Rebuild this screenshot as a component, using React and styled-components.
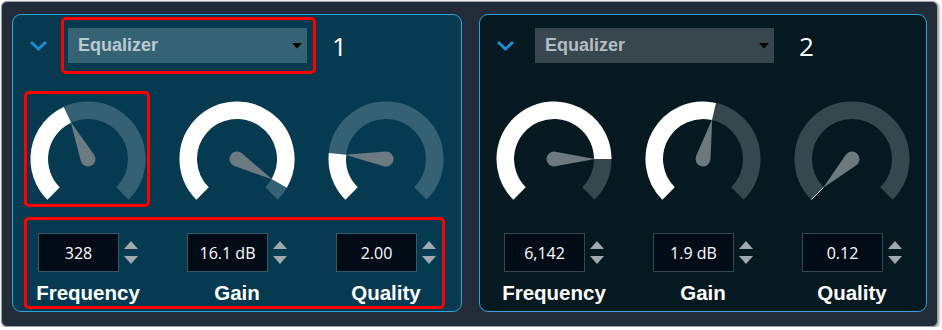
import React from 'react';
import styled, { createGlobalStyle, css } from 'styled-components';

const Global = createGlobalStyle`
  html, body { margin: 0; padding: 0; background: #ffffff; }
  body { font-family: "Liberation Sans", Arial, sans-serif; }
`;

const themes = {
  light: {
    bg: '#053a51',
    track: '#346274',
    select: '#366373',
    selectText: '#b9cad2',
    needle: '#6c7b81',
    inputBorder: '#3c5868',
  },
  dark: {
    bg: '#061820',
    track: '#37474e',
    select: '#38474e',
    selectText: '#b3bdc2',
    needle: '#6c7a80',
    inputBorder: '#2e4858',
  },
};

const Frame = styled.div`
  box-sizing: border-box;
  width: 937px;
  height: 326px;
  margin: 1px 0 0 1px;
  border: 1px solid #9ba1a6;
  border-radius: 6px;
  background: #222c38;
  box-shadow: 1px 1px 3px rgba(0, 0, 0, 0.45);
  padding: 12px 10px;
  display: flex;
  gap: 17px;
`;

const Panel = styled.section`
  box-sizing: border-box;
  width: ${(p) => p.$width}px;
  height: 298px;
  border: 1px solid #2aa3df;
  border-radius: 9px;
  background: ${(p) => p.$theme.bg};
  display: flex;
  flex-direction: column;
  padding-top: 13px;
`;

const Header = styled.div`
  display: flex;
  align-items: center;
  height: 35px;
  padding-left: 16px;
  gap: 20px;
`;

const Chevron = styled.svg`
  width: 19px;
  height: 11px;
  flex: none;
`;

/* Red annotation frame drawn over a region */
const Marked = styled.div`
  position: relative;
  margin-top: ${(p) => p.$mt || 0}px;
  ${(p) =>
    p.$on &&
    css`
      &::after {
        content: '';
        position: absolute;
        top: ${p.$t}px;
        right: ${p.$r}px;
        bottom: ${p.$b}px;
        left: ${p.$l}px;
        border: 3px solid #ff0000;
        border-radius: 5px;
        pointer-events: none;
      }
    `}
`;

const Select = styled.div`
  box-sizing: border-box;
  width: 239px;
  height: 35px;
  background: ${(p) => p.$theme.select};
  color: ${(p) => p.$theme.selectText};
  display: flex;
  align-items: center;
  justify-content: space-between;
  padding: 0 5px 0 10px;
  font: bold 18px "Liberation Sans", Arial, sans-serif;
`;

const Caret = styled.svg`
  width: 10px;
  height: 6px;
`;

const Index = styled.span`
  margin-left: 5px;
  color: #ffffff;
  font: 26px/1 "Open Sans", "Liberation Sans", sans-serif;
`;

const Row = styled.div`
  display: grid;
  grid-template-columns: repeat(3, 149px);
  justify-content: center;
`;

const GaugeRow = styled(Row)`
  margin-top: 36px;
`;

const Cell = styled.div`
  display: flex;
  flex-direction: column;
  align-items: center;
`;

const GaugeSvg = styled.svg`
  width: 120px;
  height: 112px;
  display: block;
`;

const InputGroup = styled.div`
  display: flex;
  align-items: center;
  gap: 5px;
  height: 39px;
`;

const ValueBox = styled.div`
  box-sizing: border-box;
  width: 81px;
  height: 39px;
  border: 1px solid ${(p) => p.$theme.inputBorder};
  background: #020c17;
  color: #ffffff;
  display: flex;
  align-items: center;
  justify-content: center;
  font: 16px "Open Sans", "Liberation Sans", sans-serif;
`;

const Spinner = styled.svg`
  width: 14px;
  height: 24px;
`;

const Label = styled.div`
  margin-top: 9px;
  color: #ffffff;
  font: bold 20.5px/24px "Liberation Sans", Arial, sans-serif;
`;

const CX = 60;
const CY = 60;
const R = 48.75;
const SW = 17.5;

function pt(a, r) {
  const rad = (a * Math.PI) / 180;
  return [CX + r * Math.sin(rad), CY - r * Math.cos(rad)];
}

function arc(a1, a2) {
  const [x1, y1] = pt(a1, R);
  const [x2, y2] = pt(a2, R);
  const large = a2 - a1 > 180 ? 1 : 0;
  return `M${x1} ${y1} A${R} ${R} 0 ${large} 1 ${x2} ${y2}`;
}

function Gauge({ angle, theme }) {
  const atMin = angle <= -135;
  const [lx1, ly1] = pt(-135, R - SW / 2);
  const [lx2, ly2] = pt(-135, R + SW / 2);
  return (
    <GaugeSvg viewBox="0 0 120 112">
      <path d={arc(-135, 135)} fill="none" stroke={theme.track} strokeWidth={SW} />
      {!atMin && <path d={arc(-135, angle)} fill="none" stroke="#ffffff" strokeWidth={SW} />}
      {atMin && (
        <line x1={lx1} y1={ly1} x2={lx2} y2={ly2} stroke="rgba(255,255,255,0.85)" strokeWidth="1" />
      )}
      <path
        d="M0 -41 L7.37 -1.37 A7.5 7.5 0 1 1 -7.37 -1.37 Z"
        fill={theme.needle}
        transform={`translate(${CX} ${CY}) rotate(${angle})`}
      />
    </GaugeSvg>
  );
}

function Control({ value, label, theme }) {
  return (
    <Cell>
      <InputGroup>
        <ValueBox $theme={theme}>{value}</ValueBox>
        <Spinner viewBox="0 0 14 24">
          <polygon points="0,8 7,0 14,8" fill="#a0a9ae" />
          <polygon points="0,15 14,15 7,23" fill="#a0a9ae" />
        </Spinner>
      </InputGroup>
      <Label>{label}</Label>
    </Cell>
  );
}

const panels = [
  {
    id: 1,
    width: 450,
    theme: themes.light,
    marked: true,
    gauges: [-25, 120, -84],
    values: ['328', '16.1 dB', '2.00'],
  },
  {
    id: 2,
    width: 448,
    theme: themes.dark,
    marked: false,
    gauges: [90, 13, -135],
    values: ['6,142', '1.9 dB', '0.12'],
  },
];

const labels = ['Frequency', 'Gain', 'Quality'];

function EqPanel({ data }) {
  const { theme, marked } = data;
  return (
    <Panel $width={data.width} $theme={theme}>
      <Header>
        <Chevron viewBox="0 0 19 11">
          <polyline points="2,2 9.5,9 17,2" fill="none" stroke="#1c8dcf" strokeWidth="3" />
        </Chevron>
        <Marked $on={marked} $t={-11} $r={-9} $b={-11} $l={-7}>
          <Select $theme={theme}>
            <span>Equalizer</span>
            <Caret viewBox="0 0 10 6">
              <polygon points="0,0 10,0 5,5.5" fill="#000000" />
            </Caret>
          </Select>
        </Marked>
        <Index>{data.id}</Index>
      </Header>
      <GaugeRow>
        {data.gauges.map((a, i) => (
          <Cell key={i}>
            <Marked $on={marked && i === 0} $t={-8} $r={-2} $b={4} $l={-4}>
              <Gauge angle={a} theme={theme} />
            </Marked>
          </Cell>
        ))}
      </GaugeRow>
      <Marked $on={marked} $mt={22} $t={-16} $r={16} $b={-4} $l={11}>
        <Row>
          {data.values.map((v, i) => (
            <Control key={i} value={v} label={labels[i]} theme={theme} />
          ))}
        </Row>
      </Marked>
    </Panel>
  );
}

export default function App() {
  return (
    <>
      <Global />
      <Frame>
        {panels.map((p) => (
          <EqPanel key={p.id} data={p} />
        ))}
      </Frame>
    </>
  );
}
